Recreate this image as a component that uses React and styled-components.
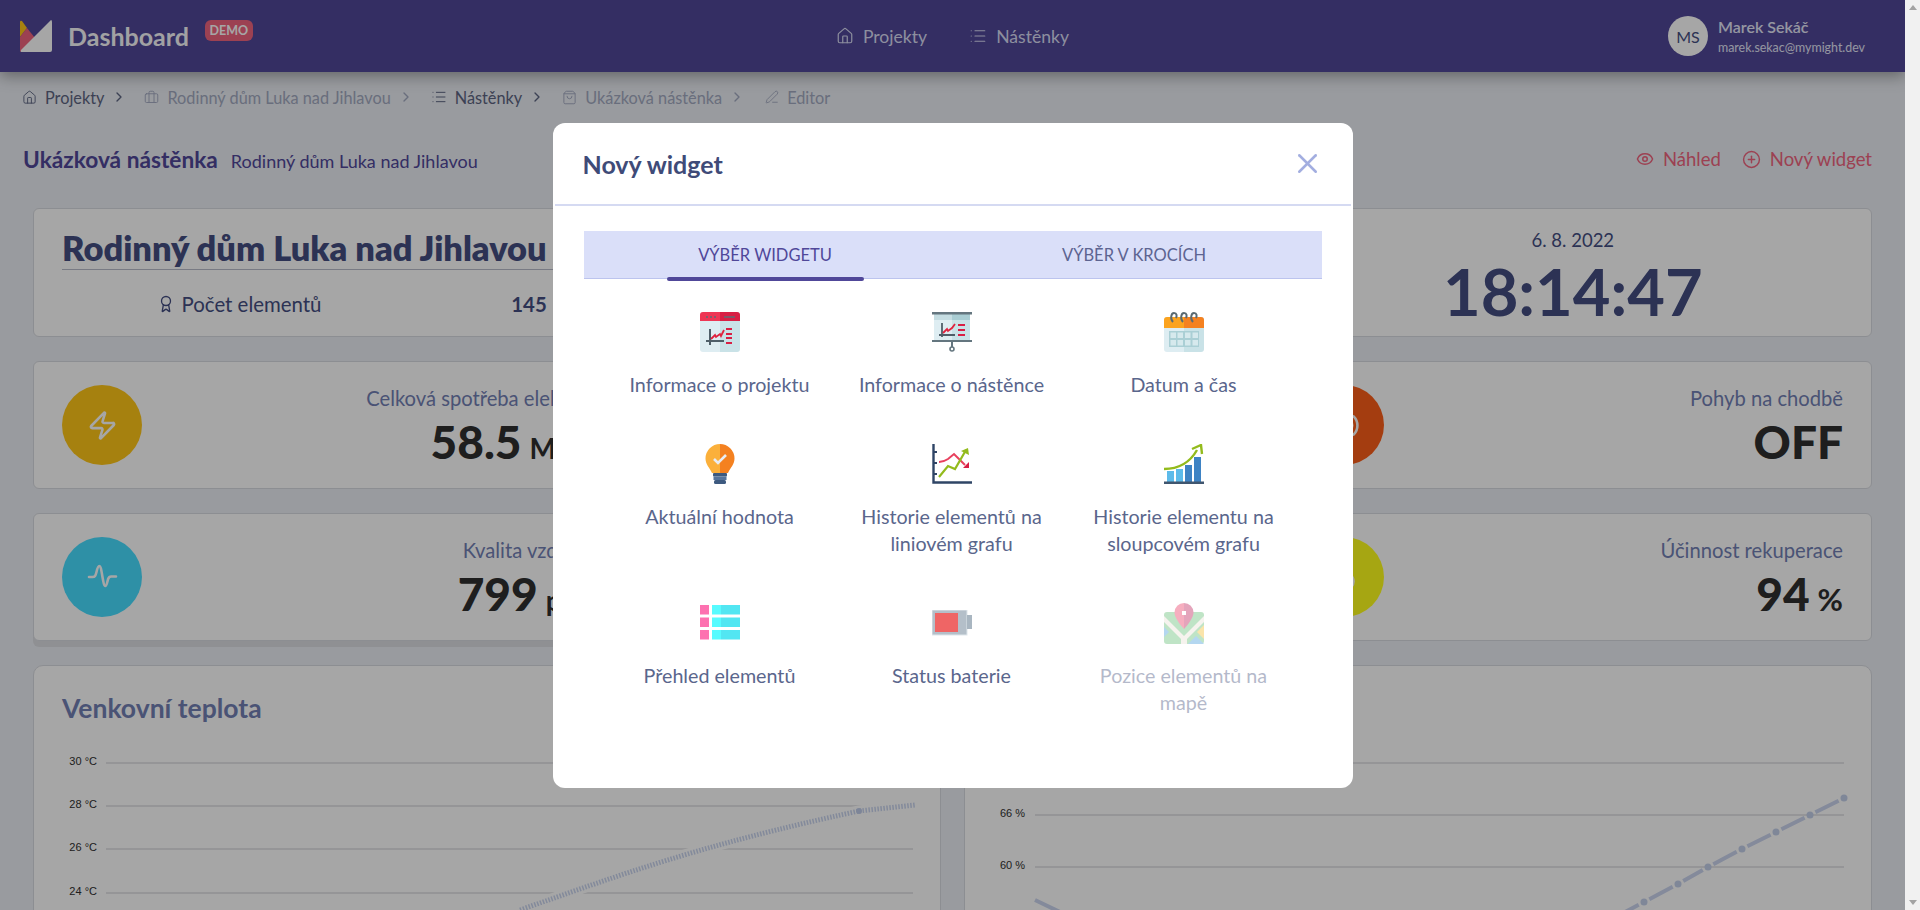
import React from 'react'
import styled, { createGlobalStyle } from 'styled-components'
import { House, List, Briefcase, ShoppingBag, PenLine, ChevronRight, Eye, CirclePlus, X, Zap, Award, Radio, Droplet } from 'lucide-react'

const GlobalStyle = createGlobalStyle`
  * { margin: 0; padding: 0; box-sizing: border-box; }
  html, body { height: 100%; overflow: hidden; }
  body { font-family: "Lato", "Noto Sans", sans-serif; background: #f1f1f1; }
`

const Shell = styled.div`
  display: flex;
  height: 910px;
  overflow: hidden;
`
const Page = styled.div`
  position: relative;
  width: 1905px;
  flex: none;
  height: 910px;
  overflow: hidden;
  background: #ebeef4;
`
const ScrollBar = styled.div`
  flex: 1;
  display: flex;
  flex-direction: column;
  justify-content: space-between;
  align-items: center;
  padding: 5px 0;
  background: #f1f1f1;
`
const Arrow = styled.span`
  width: 0;
  height: 0;
  border-left: 4px solid transparent;
  border-right: 4px solid transparent;
  border-${p => (p.$down ? 'top' : 'bottom')}: 5px solid #a3a3a3;
`

const Header = styled.header`
  position: relative;
  z-index: 1;
  height: 72px;
  display: grid;
  grid-template-columns: 1fr auto 1fr;
  align-items: center;
  padding: 0 40px;
  background: #504799;
  box-shadow: 0 4px 14px rgba(0, 0, 0, 0.35);
  color: #fff;
`
const Brand = styled.div`
  display: flex;
  align-items: center;
  margin-left: -20px;
`
const BrandName = styled.span`
  margin-left: 16px;
  font-size: 25px;
  font-weight: 700;
  color: #ffffff;
  opacity: 0.96;
`
const DemoBadge = styled.span`
  align-self: flex-start;
  margin: 0 0 0 16px;
  width: 48px;
  height: 21px;
  display: flex;
  align-items: center;
  justify-content: center;
  border-radius: 6px;
  background: #f0647e;
  font-size: 12.5px;
  font-weight: 700;
`
const Nav = styled.nav`
  display: flex;
  align-items: center;
  gap: 42px;
`
const NavLink = styled.a`
  display: flex;
  align-items: center;
  gap: 9px;
  font-size: 17.6px;
  color: #d9dcf3;
`
const User = styled.div`
  display: flex;
  justify-content: flex-end;
  align-items: center;
  gap: 10px;
`
const Avatar = styled.div`
  width: 40px;
  height: 40px;
  border-radius: 50%;
  background: #fff;
  color: #444e82;
  display: flex;
  align-items: center;
  justify-content: center;
  font-size: 16px;
`
const UserText = styled.div`
  display: flex;
  flex-direction: column;
  gap: 5px;
  color: #e4e6f7;
`
const UserName = styled.span`
  font-size: 16px;
  font-weight: 600;
  line-height: 18px;
`
const UserMail = styled.span`
  font-size: 12.4px;
  line-height: 14px;
`

const Crumbs = styled.div`
  height: 50px;
  display: flex;
  align-items: center;
  padding-left: 22px;
`
const Crumb = styled.span`
  display: flex;
  align-items: center;
  gap: 8px;
  font-size: 16.3px;
  color: ${p => (p.$muted ? '#a2a9c0' : '#5d6582')};
`
const CrumbArrow = styled.span`
  display: flex;
  margin: 0 ${p => p.$after || 17}px 0 7px;
  color: ${p => (p.$muted ? '#a2a9c0' : '#5d6582')};
`

const TitleRow = styled.div`
  height: 36px;
  margin-top: 19px;
  padding: 0 33px 0 23px;
  display: flex;
  align-items: center;
  justify-content: space-between;
`
const TitleGroup = styled.div`
  display: flex;
  align-items: baseline;
  gap: 13px;
`
const BoardName = styled.h2`
  font-size: 22.7px;
  font-weight: 700;
  color: #504799;
`
const BoardPlace = styled.span`
  font-size: 18px;
  color: #504799;
`
const Actions = styled.div`
  display: flex;
  gap: 21px;
`
const Action = styled.a`
  display: flex;
  align-items: center;
  gap: 9px;
  font-size: 18.5px;
  color: #f0647e;
`

const Content = styled.main`
  margin-top: 31px;
  padding: 0 33px;
  display: grid;
  grid-template-columns: repeat(3, 1fr);
  gap: 24px;
`
const Card = styled.section`
  background: #fff;
  border: 1px solid #d8dae0;
  border-radius: 6px;
`
const InfoCard = styled(Card)`
  grid-column: 1 / -1;
  height: 129px;
  display: grid;
  grid-template-columns: repeat(3, 1fr);
  column-gap: 24px;
`
const InfoMain = styled.div`
  grid-column: span 2;
  padding: 18px 0 0 28px;
`
const InfoTitle = styled.h1`
  font-size: 34.4px;
  line-height: 41px;
  height: 43px;
  font-weight: 800;
  color: #444e82;
  border-bottom: 1px solid #b9bcc9;
`
const InfoRow = styled.div`
  display: grid;
  grid-template-columns: 354px 226px;
  margin-top: 22px;
  font-size: 20.4px;
  color: #444e82;
`
const InfoLabel = styled.span`
  display: flex;
  align-items: center;
  justify-content: center;
  gap: 7px;
`
const InfoValue = styled.b`
  text-align: center;
  font-weight: 700;
`
const Clock = styled.div`
  display: flex;
  flex-direction: column;
  align-items: center;
  padding-top: 19px;
  color: #444e82;
`
const ClockDate = styled.span`
  font-size: 18.5px;
  line-height: 24px;
`
const ClockTime = styled.span`
  font-size: 65px;
  line-height: 78px;
  font-weight: 700;
`
const StatCard = styled(Card)`
  height: 128px;
  display: flex;
  align-items: center;
  justify-content: space-between;
  padding: 0 28px;
  box-shadow: ${p => (p.$raised ? '0 6px 0 #dcdee2' : 'none')};
`
const StatIcon = styled.div`
  width: 80px;
  height: 80px;
  flex: none;
  border-radius: 50%;
  display: flex;
  align-items: center;
  justify-content: center;
  background: ${p => p.$color};
  color: #fff;
`
const StatBody = styled.div`
  align-self: flex-start;
  padding-top: 22px;
  display: flex;
  flex-direction: column;
  align-items: flex-end;
`
const StatLabel = styled.span`
  font-size: 20.2px;
  line-height: 28px;
  color: #7280b4;
`
const StatValue = styled.span`
  display: block;
  height: 52px;
  margin-top: 4px;
  font-size: 46px;
  line-height: 52px;
  font-weight: 900;
  color: #2e2e2e;
`
const StatUnit = styled.small`
  margin-left: 8px;
  font-size: ${p => p.$size || 28}px;
  line-height: 1;
  font-weight: 700;
`
const ChartsRow = styled.div`
  grid-column: 1 / -1;
  display: grid;
  grid-template-columns: 1fr 1fr;
  gap: 23px;
`
const ChartCard = styled(Card)`
  height: 400px;
  padding-top: 25px;
  border-radius: 10px;
`
const ChartTitle = styled.h3`
  margin-left: 28px;
  height: 34px;
  font-size: 26.5px;
  line-height: 34px;
  font-weight: 700;
  color: #7280b4;
`
const ChartSvg = styled.svg`
  display: block;
  margin-top: 15px;
  overflow: hidden;
`
const AxisLabel = styled.text`
  font-family: "Liberation Sans", sans-serif;
  font-size: 11px;
  fill: #303030;
`

const Overlay = styled.div`
  position: absolute;
  inset: 0;
  z-index: 5;
  display: flex;
  justify-content: center;
  padding-top: 123px;
  background: rgba(0, 0, 0, 0.35);
`
const Modal = styled.div`
  width: 800px;
  height: 665px;
  border-radius: 12px;
  background: #fff;
  padding: 0 2px;
`
const ModalHead = styled.div`
  height: 83px;
  display: flex;
  align-items: center;
  justify-content: space-between;
  padding: 0 27px 0 28px;
  border-bottom: 2px solid #d5daf2;
`
const ModalTitle = styled.h2`
  font-size: 25px;
  font-weight: 700;
  color: #3f4b78;
`
const CloseButton = styled.span`
  display: flex;
  color: #a3aee0;
`
const Tabs = styled.div`
  margin: 25px 0 0 29px;
  width: 738px;
  height: 48px;
  display: grid;
  grid-template-columns: 363px 375px;
  background: #dadff9;
  border-bottom: 1px solid #bcc4ee;
`
const Tab = styled.div`
  position: relative;
  display: flex;
  align-items: center;
  justify-content: center;
  font-size: 16.5px;
  color: ${p => (p.$active ? '#504799' : '#5d6491')};
  &::after {
    content: '';
    display: ${p => (p.$active ? 'block' : 'none')};
    position: absolute;
    left: 83px;
    bottom: -3px;
    width: 197px;
    height: 4px;
    border-radius: 2px;
    background: #504799;
  }
`
const WidgetGrid = styled.div`
  margin: 33px 0 0 49px;
  width: 696px;
  display: grid;
  grid-template-columns: repeat(3, 232px);
  row-gap: 46px;
`
const Widget = styled.div`
  display: flex;
  flex-direction: column;
  align-items: center;
  opacity: ${p => (p.$disabled ? 0.45 : 1)};
`
const WidgetIconBox = styled.div`
  height: 40px;
  display: flex;
  align-items: center;
  justify-content: center;
`
const WidgetLabel = styled.span`
  margin-top: 19px;
  width: 200px;
  text-align: center;
  font-size: 19.7px;
  line-height: 27px;
  color: #5a668c;
`

const Logo = () => (
  <svg width="32" height="32" viewBox="0 0 32 32">
    <path d="M0 2 Q0 0 2 1 L7 8 L0 17Z" fill="#ffc617" />
    <path d="M7 8 L15 18 L0 32 L0 17Z" fill="#f0647e" />
    <path d="M31 0 Q32 0 32 2 V30 Q32 32 30 32 H2 Q0 32 1 30Z" fill="#fff" />
  </svg>
)

const ProjectIcon = () => (
  <svg width="40" height="40" viewBox="0 0 40 40">
    <path d="M3 0h17v40H3a3 3 0 0 1-3-3V3a3 3 0 0 1 3-3z" fill="#deedf2" />
    <path d="M20 0h17a3 3 0 0 1 3 3v34a3 3 0 0 1-3 3H20z" fill="#c9e2e7" />
    <path d="M3 0h17v9H0V3a3 3 0 0 1 3-3z" fill="#ee3654" />
    <path d="M20 0h17a3 3 0 0 1 3 3v6H20z" fill="#d81f44" />
    <path d="M6 5h2M10 5h2M14 5h2M24 5h11" stroke="#5c6c76" strokeWidth="1.6" />
    <path d="M10 17v15M6 29h18M10 29v4" stroke="#4f5f69" strokeWidth="2" fill="none" />
    <path d="M11 27l4-4 1 2 4-3 1 2 3-6" stroke="#e0233f" strokeWidth="1.8" fill="none" />
    <path d="M26 17h6M26 22h6M26 26h6M26 31h6" stroke="#d81f44" strokeWidth="2" />
  </svg>
)
const BoardIcon = () => (
  <svg width="40" height="40" viewBox="0 0 40 40">
    <rect x="2" y="1" width="18" height="28" fill="#deedf2" />
    <rect x="20" y="1" width="18" height="28" fill="#c9e2e7" />
    <rect x="2" y="2" width="18" height="6" fill="#c5dde2" />
    <rect x="20" y="2" width="18" height="6" fill="#a9cdd3" />
    <path d="M0 1.2h40" stroke="#64767f" strokeWidth="2.4" />
    <path d="M0 29h40" stroke="#64767f" strokeWidth="2.2" />
    <path d="M20 30v5" stroke="#64767f" strokeWidth="2" />
    <circle cx="20" cy="37" r="2" fill="none" stroke="#64767f" strokeWidth="1.6" />
    <path d="M10 11v14M7 23h16" stroke="#4f5f69" strokeWidth="1.8" fill="none" />
    <path d="M11 21l4-4 1 2 4-3 3-4" stroke="#e0233f" strokeWidth="1.8" fill="none" />
    <path d="M26 13h7M26 18h7M26 23h7" stroke="#d81f44" strokeWidth="1.8" />
  </svg>
)
const CalendarIcon = () => (
  <svg width="40" height="40" viewBox="0 0 40 40">
    <path d="M3 5h17v35H3a3 3 0 0 1-3-3V8a3 3 0 0 1 3-3z" fill="#deedf2" />
    <path d="M20 5h17a3 3 0 0 1 3 3v29a3 3 0 0 1-3 3H20z" fill="#c9e2e7" />
    <path d="M3 5h17v11H0V8a3 3 0 0 1 3-3z" fill="#fba31f" />
    <path d="M20 5h17a3 3 0 0 1 3 3v8H20z" fill="#f48120" />
    <path d="M9 10c-3-3-2-9 1-9s3 3 2 5M19 10c-3-3-2-9 1-9s3 3 2 5M29 10c-3-3-2-9 1-9s3 3 2 5" stroke="#5a6a72" strokeWidth="2" fill="none" />
    <rect x="5" y="19" width="30" height="16" fill="#aacfd5" />
    {[6.5, 13.5, 21, 28.5].map(x => [20.5, 28].map(y => (
      <rect key={`${x}-${y}`} x={x} y={y} width="5.5" height="5.5" fill="#d6e9ed" />
    )))}
  </svg>
)
const BulbIcon = () => (
  <svg width="40" height="40" viewBox="0 0 40 40">
    <path d="M20 0a14.500 14.500 0 0 0-14.500 14.500c0 6 4 9 6.500 14.500h8z" fill="#fbb03b" />
    <path d="M20 0a14.500 14.500 0 0 1 14.500 14.500c0 6-4 9-6.500 14.500h-8z" fill="#f48120" />
    <path d="M14 15l4 4 8-8" stroke="#e8ecf3" strokeWidth="2.600" fill="none" />
    <rect x="13" y="29" width="14" height="3.500" rx="1" fill="#3d5a80" />
    <rect x="13.500" y="32.500" width="13" height="3.500" fill="#55749c" />
    <rect x="14" y="36" width="12" height="4" rx="1.500" fill="#3d5a80" />
  </svg>
)
const LineChartIcon = () => (
  <svg width="40" height="40" viewBox="0 0 40 40">
    <path d="M1.500 0v38.500H40" stroke="#2f4566" strokeWidth="2.400" fill="none" />
    <path d="M2 8h3M2 19h3M2 30h3" stroke="#2f4566" strokeWidth="1.800" />
    <path d="M7 18c4 0 6-1 9-3l6-5 7 7 4 4" stroke="#e8405e" strokeWidth="2" fill="none" />
    <path d="M31 24h6v-6z" fill="#d81f44" />
    <path d="M7 33l9-11 7 3 11-19" stroke="#93bb1c" strokeWidth="2.200" fill="none" />
    <path d="M29 7l7-3 1 7z" fill="#93bb1c" />
  </svg>
)
const BarChartIcon = () => (
  <svg width="40" height="40" viewBox="0 0 40 40">
    <rect x="3" y="27" width="7" height="11" fill="#5dbbea" />
    <rect x="12" y="25" width="7" height="13" fill="#5dbbea" />
    <rect x="21" y="21" width="7" height="17" fill="#3e83c4" />
    <rect x="30" y="13" width="7" height="25" fill="#3e83c4" />
    <path d="M0 38.800h40" stroke="#40566f" strokeWidth="2.400" />
    <path d="M0 25c14 0 25-5 33-19" stroke="#93bb1c" strokeWidth="2.400" fill="none" />
    <path d="M28 5l9-4 1 9" stroke="#93bb1c" strokeWidth="2.400" fill="none" />
  </svg>
)
const TableIcon = () => (
  <svg width="40" height="36" viewBox="0 0 40 36">
    {[0, 12.500, 25].map(y => (
      <g key={y}>
        <rect x="0" y={y} width="9" height="9.500" fill="#fd71b0" />
        <rect x="12" y={y} width="9" height="9.500" fill="#57fbff" />
        <rect x="21" y={y} width="19" height="9.500" fill="#52e6f2" />
      </g>
    ))}
  </svg>
)
const BatteryIcon = () => (
  <svg width="40" height="26" viewBox="0 0 40 26">
    <rect x="0" y="0" width="35" height="25" fill="#b4bfc9" stroke="#dfe6eb" strokeWidth="1" />
    <rect x="3" y="3" width="23" height="19" fill="#ef6565" />
    <path d="M35 5h5v14h-5z" fill="#a9b6c1" />
  </svg>
)
const MapIcon = () => (
  <svg width="40" height="41" viewBox="0 0 40 41">
    <rect x="0" y="9" width="40" height="32" rx="3" fill="#72c582" />
    <path d="M0 13l20 20 20-20v6L23 36v5h-6v-5L0 19z" fill="#ece6db" />
    <path d="M0 24l5 5-5 5z" fill="#5ba8e0" />
    <path d="M40 22l-7 7 7 7z" fill="#f6c445" />
    <path d="M24 41l8-8 8 8z" fill="#5ba8e0" />
    <path d="M20 0a9.500 9.500 0 0 0-9.500 9.500C10.500 16 20 26 20 26z" fill="#ec4e73" />
    <path d="M20 0a9.500 9.500 0 0 1 9.500 9.500C29.500 16 20 26 20 26z" fill="#c4386b" />
    <rect x="18" y="8" width="4" height="4" fill="#fff" />
  </svg>
)

const Pulse = () => (
  <svg width="31" height="28" viewBox="0 0 31 28" fill="none" stroke="currentColor" strokeWidth="2.600" strokeLinecap="round" strokeLinejoin="round">
    <path d="M2 14h3.500c2.500 0 3-1 4-5 .8-3.500 1.500-6 2.800-6 1.500 0 2 4 3 10 1 5.500 1.800 10 3 10 1.300 0 2-4 2.800-7 .7-2 1.400-2.500 3-2.500H29" />
  </svg>
)

const widgets = [
  { label: 'Informace o projektu', icon: <ProjectIcon /> },
  { label: 'Informace o nástěnce', icon: <BoardIcon /> },
  { label: 'Datum a čas', icon: <CalendarIcon /> },
  { label: 'Aktuální hodnota', icon: <BulbIcon /> },
  { label: 'Historie elementů na liniovém grafu', icon: <LineChartIcon /> },
  { label: 'Historie elementu na sloupcovém grafu', icon: <BarChartIcon /> },
  { label: 'Přehled elementů', icon: <TableIcon /> },
  { label: 'Status baterie', icon: <BatteryIcon /> },
  { label: 'Pozice elementů na mapě', icon: <MapIcon />, disabled: true },
]

const stats = [
  { color: '#ffc617', icon: <Zap size={31} strokeWidth={2} />, label: 'Celková spotřeba elektřiny', value: '58.5', unit: 'MWh' },
  { color: '#edeef2' },
  { color: '#fc5f19', icon: <Radio size={31} />, label: 'Pohyb na chodbě', value: 'OFF' },
  { color: '#47ddff', icon: <Pulse />, label: 'Kvalita vzduchu', value: '799', unit: 'ppm', raised: true },
  { color: '#edeef2' },
  { color: '#ffff1c', icon: <Droplet size={31} />, label: 'Účinnost rekuperace', value: '94', unit: '%', unitSize: 31 },
]

// series points in chart coordinates, the dashes stop short of each point
const humPoints = [[645, 180], [679, 162], [713, 144], [743, 127], [777, 109], [811, 92], [845, 75], [879, 58]]

const App = () => {
  const tempGrid = [23, 66, 109, 153]
  const tempLabels = ['30 °C', '28 °C', '26 °C', '24 °C']
  return (
    <Shell>
      <GlobalStyle />
      <Page>
        <Header>
          <Brand>
            <Logo />
            <BrandName>Dashboard</BrandName>
            <DemoBadge>DEMO</DemoBadge>
          </Brand>
          <Nav>
            <NavLink><House size={18} strokeWidth={1.6} />Projekty</NavLink>
            <NavLink><List size={18} strokeWidth={1.6} />Nástěnky</NavLink>
          </Nav>
          <User>
            <Avatar>MS</Avatar>
            <UserText>
              <UserName>Marek Sekáč</UserName>
              <UserMail>marek.sekac@mymight.dev</UserMail>
            </UserText>
          </User>
        </Header>

        <Crumbs>
          <Crumb><House size={15} strokeWidth={1.5} />Projekty</Crumb>
          <CrumbArrow><ChevronRight size={16} /></CrumbArrow>
          <Crumb $muted><Briefcase size={15} strokeWidth={1.5} />Rodinný dům Luka nad Jihlavou</Crumb>
          <CrumbArrow $muted><ChevronRight size={16} /></CrumbArrow>
          <Crumb><List size={16} strokeWidth={1.5} />Nástěnky</Crumb>
          <CrumbArrow><ChevronRight size={16} /></CrumbArrow>
          <Crumb $muted><ShoppingBag size={15} strokeWidth={1.5} />Ukázková nástěnka</Crumb>
          <CrumbArrow $muted $after={20}><ChevronRight size={16} /></CrumbArrow>
          <Crumb $muted><PenLine size={14} strokeWidth={1.5} />Editor</Crumb>
        </Crumbs>

        <TitleRow>
          <TitleGroup>
            <BoardName>Ukázková nástěnka</BoardName>
            <BoardPlace>Rodinný dům Luka nad Jihlavou</BoardPlace>
          </TitleGroup>
          <Actions>
            <Action><Eye size={18} strokeWidth={2} />Náhled</Action>
            <Action><CirclePlus size={19} strokeWidth={1.8} />Nový widget</Action>
          </Actions>
        </TitleRow>

        <Content>
          <InfoCard>
            <InfoMain>
              <InfoTitle>Rodinný dům Luka nad Jihlavou</InfoTitle>
              <InfoRow>
                <InfoLabel><Award size={18} strokeWidth={1.8} />Počet elementů</InfoLabel>
                <InfoValue>145</InfoValue>
              </InfoRow>
            </InfoMain>
            <Clock>
              <ClockDate>6. 8. 2022</ClockDate>
              <ClockTime>18:14:47</ClockTime>
            </Clock>
          </InfoCard>

          {stats.map((s, i) => (
            <StatCard key={i} $raised={s.raised}>
              <StatIcon $color={s.color}>{s.icon}</StatIcon>
              {s.label && (
                <StatBody>
                  <StatLabel>{s.label}</StatLabel>
                  <StatValue>{s.value}{s.unit && <StatUnit $size={s.unitSize}>{s.unit}</StatUnit>}</StatValue>
                </StatBody>
              )}
            </StatCard>
          ))}

          <ChartsRow>
            <ChartCard>
              <ChartTitle>Venkovní teplota</ChartTitle>
              <ChartSvg width="905" height="300" viewBox="0 0 905 300">
                {tempGrid.map((y, i) => (
                  <g key={y}>
                    <line x1="72" x2="879" y1={y} y2={y} stroke="#dcdde0" strokeWidth="1.500" />
                    <AxisLabel x="63" y={y + 2} textAnchor="end">{tempLabels[i]}</AxisLabel>
                  </g>
                ))}
                <path d="M486 170 C586 135 666 105 825 71 L881 65" fill="none" stroke="#fff" strokeWidth="11" />
                <path d="M486 170 C586 135 666 105 825 71 L881 65" fill="none" stroke="#c9d4ee" strokeWidth="5" strokeDasharray="1.500 1.500" />
                <circle cx="825" cy="71" r="3" fill="#c0cdea" />
              </ChartSvg>
            </ChartCard>
            <ChartCard>
              <ChartTitle />
              <ChartSvg width="905" height="300" viewBox="0 0 905 300">
                {[23, 75, 127].map(y => (
                  <line key={y} x1="70" x2="879" y1={y} y2={y} stroke="#dcdde0" strokeWidth="1.500" />
                ))}
                <AxisLabel x="60" y="77" textAnchor="end">66 %</AxisLabel>
                <AxisLabel x="60" y="129" textAnchor="end">60 %</AxisLabel>
                <path d="M70 160 L95 172" fill="none" stroke="#cbd5ee" strokeWidth="4" />
                {humPoints.map(([x, y], i) => {
                  const next = humPoints[i + 1]
                  if (!next) return null
                  const t = 6 / Math.hypot(next[0] - x, next[1] - y)
                  return (
                    <line
                      key={x}
                      x1={x + (next[0] - x) * t}
                      y1={y + (next[1] - y) * t}
                      x2={next[0] - (next[0] - x) * t}
                      y2={next[1] - (next[1] - y) * t}
                      stroke="#cbd5ee"
                      strokeWidth="4"
                    />
                  )
                })}
                {humPoints.map(([x, y]) => (
                  <circle key={x} cx={x} cy={y} r="3.500" fill="#c4cfea" />
                ))}
              </ChartSvg>
            </ChartCard>
          </ChartsRow>
        </Content>

        <Overlay>
          <Modal>
            <ModalHead>
              <ModalTitle>Nový widget</ModalTitle>
              <CloseButton><X size={33} strokeWidth={1.8} /></CloseButton>
            </ModalHead>
            <Tabs>
              <Tab $active>VÝBĚR WIDGETU</Tab>
              <Tab>VÝBĚR V KROCÍCH</Tab>
            </Tabs>
            <WidgetGrid>
              {widgets.map(w => (
                <Widget key={w.label} $disabled={w.disabled}>
                  <WidgetIconBox>{w.icon}</WidgetIconBox>
                  <WidgetLabel>{w.label}</WidgetLabel>
                </Widget>
              ))}
            </WidgetGrid>
          </Modal>
        </Overlay>
      </Page>
      <ScrollBar>
        <Arrow />
        <Arrow $down />
      </ScrollBar>
    </Shell>
  )
}

export default App
